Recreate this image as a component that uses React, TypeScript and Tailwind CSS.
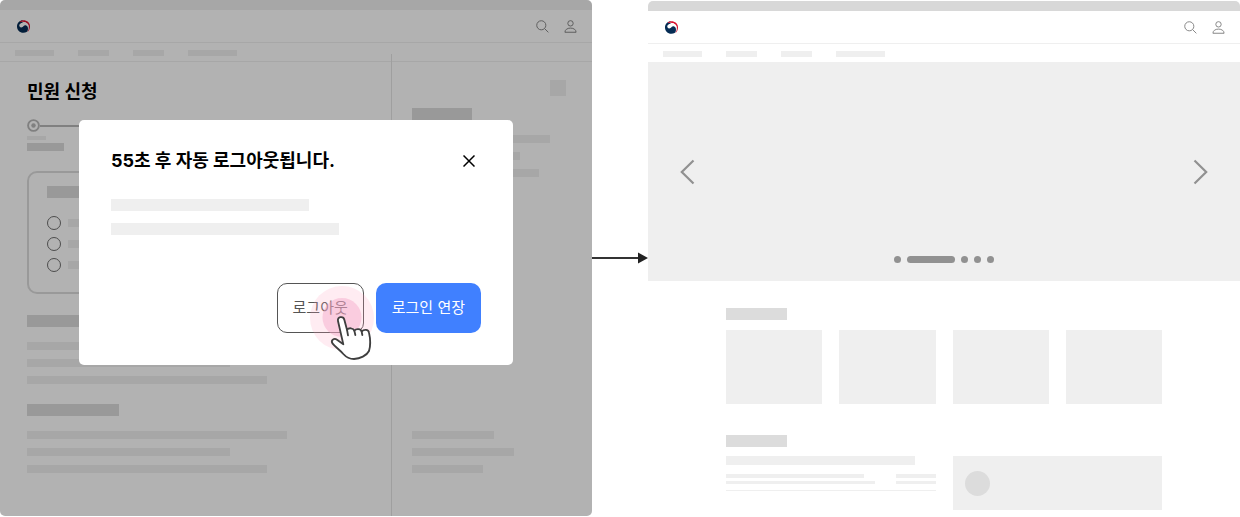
import React from 'react';
import clsx from 'clsx';

const Bar: React.FC<{ className?: string }> = ({ className }) => (
  <div className={clsx('bg-[#efefef]', className)} />
);

const StrongBar: React.FC<{ className?: string }> = ({ className }) => (
  <div className={clsx('h-3 bg-[#dcdcdc]', className)} />
);

const TextLines: React.FC<{ widths: string[]; className?: string }> = ({ widths, className }) => (
  <div className={clsx('flex flex-col gap-[9px]', className)}>
    {widths.map((width) => (
      <Bar key={width} className={clsx('h-2', width)} />
    ))}
  </div>
);

const GovLogo = () => (
  <svg viewBox="0 0 39 38" className="h-[13px] w-[13px]" aria-hidden="true">
    <path d="M19 0C8 0 0 8 0 19s8 19 19 19c8 0 13-4 15-9 3-6 1-12-4-14L12 4z" fill="#052c54" />
    <path d="M9 3C22-4 39 4 39 18c0 8-3 13-8 18 5-9 5-17 2-24C28 5 18 3 9 6z" fill="#d8122f" />
    <path
      d="M7 14C12 6 26 4 33 12C38 20 35 28 31 35C34 26 34 19 28 16C20 13 20 22 13 22C8 22 6 18 7 14Z"
      fill="#fff"
    />
  </svg>
);

const SearchIcon = () => (
  <svg viewBox="0 0 14 14" className="h-[13px] w-[13px]" fill="none" stroke="currentColor" aria-hidden="true">
    <circle cx="5.7" cy="5.7" r="4.9" />
    <path d="M9.300 9.300 13.300 13.300" />
  </svg>
);

const UserIcon = () => (
  <svg viewBox="0 0 14 14" className="h-[13px] w-[13px]" fill="none" stroke="currentColor" aria-hidden="true">
    <circle cx="7" cy="3.600" r="2.900" />
    <path d="M1 13.200C1 10.500 3.500 8.700 7 8.700s6 1.800 6 4.500z" />
  </svg>
);

const SiteHeader: React.FC<{ barClass: string }> = ({ barClass }) => (
  <>
    <div className={clsx('h-2.5', barClass)} />
    <header className="border-b border-[#efefef]">
      <div className="box-content flex h-8 items-center justify-between border-b border-[#efefef] px-[15px]">
        <a href="#home" aria-label="홈" className="ml-0.5">
          <GovLogo />
        </a>
        <div className="flex gap-[15px] text-[#7f7f7f]">
          <button type="button" aria-label="검색">
            <SearchIcon />
          </button>
          <button type="button" aria-label="내 정보">
            <UserIcon />
          </button>
        </div>
      </div>
      <nav className="flex gap-6 px-[15px] pt-[7px] pb-[5px]">
        <Bar className="h-1.5 w-[39px]" />
        <Bar className="h-1.5 w-[31px]" />
        <Bar className="h-1.5 w-[31px]" />
        <Bar className="h-1.5 w-[49px]" />
      </nav>
    </header>
  </>
);

const options = ['w-20', 'w-24', 'w-28'];

const ApplicationForm = () => (
  <main className="flex-1 px-[27px] pt-[17px] pb-[43px]">
    <h1 className="text-[18px] leading-[26px] font-bold text-black">민원 신청</h1>

    {/* Step indicator */}
    <div className="mt-3.5 flex items-center">
      <svg viewBox="0 0 13 13" className="h-[13px] w-[13px] shrink-0" aria-hidden="true">
        <circle cx="6.500" cy="6.500" r="5.400" fill="none" stroke="#b8b8b8" strokeWidth="1.900" />
        <circle cx="6.500" cy="6.500" r="2.200" fill="#b8b8b8" />
      </svg>
      <div className="h-0.5 w-40 bg-[#b8b8b8]" />
    </div>
    <Bar className="mt-1 h-1 w-[19px]" />
    <div className="mt-[3px] h-2 w-[37px] bg-[#dcdcdc]" />

    {/* Question card */}
    <fieldset className="mt-5 rounded-[10px] border-2 border-[#dcdcdc] px-[18px] pt-[13px] pb-5">
      <StrongBar className="w-24" />
      <div className="mt-[18px] flex flex-col gap-[7px]">
        {options.map((width) => (
          <label key={width} className="flex items-center gap-[7px]">
            <input
              type="radio"
              name="option"
              aria-label="선택 항목"
              className="size-3.5 appearance-none rounded-full border border-[#6e6e6e]"
            />
            <Bar className={clsx('h-2', width)} />
          </label>
        ))}
      </div>
    </fieldset>

    <StrongBar className="mt-[21px] w-[92px]" />
    <TextLines className="mt-[15px]" widths={['w-[260px]', 'w-[203px]', 'w-[240px]']} />
    <StrongBar className="mt-5 w-[92px]" />
    <TextLines className="mt-[15px]" widths={['w-[260px]', 'w-[203px]', 'w-[240px]']} />
  </main>
);

const SidePanel = () => (
  <aside className="-mt-2 flex w-[201px] flex-col border-l border-[#e4e4e4] pt-[26px] pr-[26px] pb-[43px] pl-5">
    <Bar className="size-4 self-end" />
    <StrongBar className="mt-3 w-[60px]" />
    <TextLines className="mt-[15px]" widths={['w-[138px]', 'w-[108px]', 'w-[127px]']} />
    <TextLines className="mt-auto" widths={['w-[82px]', 'w-[102px]', 'w-[71px]']} />
  </aside>
);

const TapPointer = () => (
  <svg
    viewBox="0 0 64 76"
    className="pointer-events-none absolute top-[3px] left-[33px] z-10 h-[76px] w-16"
    aria-hidden="true"
  >
    <circle cx="32" cy="32" r="32" fill="#ff9fc0" opacity="0.2" />
    <circle cx="32" cy="31.500" r="19.500" fill="#f4a6c8" opacity="0.45" />
    <g transform="translate(20 29) scale(0.3333)" stroke="#3f3f3f" strokeWidth="5.500" strokeLinecap="round" strokeLinejoin="round">
      <path
        d="M24 18C21 5 40 2 43 14L51 44C56 38 70 38 73 47C79 40 93 41 95 50C102 42 115 43 117 53C122 75 122 92 117 108C110 122 90 131 72 132C58 132 48 126 40 117C30 105 16 96 8 86C1 76 12 68 21 74L40 88Z"
        fill="#fff"
      />
      <path d="M51 44L54 61M73 47L76 60M95 50L97 60" fill="none" />
    </g>
  </svg>
);

const LogoutDialog = () => (
  <div
    role="dialog"
    aria-modal="true"
    aria-labelledby="logout-title"
    className="w-full max-w-[434px] rounded-[5px] bg-white px-8 pt-7 pb-8"
  >
    <div className="flex items-center justify-between">
      <h2 id="logout-title" className="text-[18px] leading-[26px] font-bold text-black">
        55초 후 자동 로그아웃됩니다.
      </h2>
      <button type="button" aria-label="닫기" className="flex size-6 items-center justify-center">
        <svg viewBox="0 0 12 12" className="h-3 w-3" stroke="#000" strokeWidth="1.500" aria-hidden="true">
          <path d="M.5.5l11 11M11.500.5l-11 11" />
        </svg>
      </button>
    </div>
    <div className="mt-[25px] flex flex-col gap-3">
      <Bar className="h-3 w-[198px]" />
      <Bar className="h-3 w-[228px]" />
    </div>
    <div className="mt-12 flex justify-end gap-3">
      <div className="relative">
        <button
          type="button"
          className="h-[50px] rounded-[10px] border border-[#555] px-[15px] text-[15px] text-[#555]"
        >
          로그아웃
        </button>
        <TapPointer />
      </div>
      <button type="button" className="h-[50px] rounded-[10px] bg-[#4080ff] px-4 text-[15px] text-white">
        로그인 연장
      </button>
    </div>
  </div>
);

const FlowArrow = () => (
  <div className="flex w-14 shrink-0 items-center self-center">
    <div className="h-0.5 flex-1 bg-[#333]" />
    <svg viewBox="0 0 10 12" className="h-3 w-2.5" aria-hidden="true">
      <path d="M0 .5 10 6 0 11.500z" fill="#222" />
    </svg>
  </div>
);

const HeroCarousel = () => (
  <section className="relative flex h-[218px] items-center justify-between bg-[#efefef] px-8">
    <button type="button" aria-label="이전">
      <svg viewBox="0 0 15 26" className="h-[26px] w-[15px]" fill="none" stroke="#919191" strokeWidth="2.200" aria-hidden="true">
        <path d="M13.500 1.500 1.800 13l11.700 11.500" />
      </svg>
    </button>
    <button type="button" aria-label="다음">
      <svg viewBox="0 0 15 26" className="h-[26px] w-[15px]" fill="none" stroke="#919191" strokeWidth="2.200" aria-hidden="true">
        <path d="M1.500 1.500 13.200 13 1.500 24.500" />
      </svg>
    </button>
    <div className="absolute inset-x-0 bottom-[18px] flex justify-center gap-1.5">
      <span className="size-[7px] rounded-full bg-[#919191]" />
      <span className="h-[7px] w-12 rounded-full bg-[#919191]" />
      <span className="size-[7px] rounded-full bg-[#919191]" />
      <span className="size-[7px] rounded-full bg-[#919191]" />
      <span className="size-[7px] rounded-full bg-[#919191]" />
    </div>
  </section>
);

const HomeContent = () => (
  <main className="px-[78px] pt-[27px]">
    <StrongBar className="w-[61px]" />
    <div className="mt-2.5 grid grid-cols-4 gap-[17px]">
      <Bar className="h-[74px]" />
      <Bar className="h-[74px]" />
      <Bar className="h-[74px]" />
      <Bar className="h-[74px]" />
    </div>

    <StrongBar className="mt-[31px] w-[61px]" />
    <div className="mt-[9px] grid grid-cols-2 gap-[17px]">
      <div>
        <Bar className="h-[9px] w-[189px]" />
        <div className="mt-[9px] flex justify-between border-b border-[#efefef] pb-1.5">
          <div className="flex flex-col gap-[3px]">
            <Bar className="h-1 w-[138px]" />
            <Bar className="h-[3px] w-[149px]" />
          </div>
          <div className="flex flex-col gap-[3px]">
            <Bar className="h-1 w-10" />
            <Bar className="h-[3px] w-10" />
          </div>
        </div>
      </div>
      <div className="flex h-[54px] items-center bg-[#efefef] px-3">
        <div className="size-[25px] rounded-full bg-[#dcdcdc]" />
      </div>
    </div>
  </main>
);

export default function App() {
  return (
    <div className="flex bg-white font-['Inter','Noto_Sans_CJK_KR',sans-serif]">
      {/* Application page with session timeout dialog */}
      <div className="relative flex flex-1 flex-col self-start overflow-hidden rounded-[5px] bg-white">
        <SiteHeader barClass="bg-[#efefef]" />
        <div className="flex flex-1">
          <ApplicationForm />
          <SidePanel />
        </div>
        <div className="absolute inset-0 flex items-start justify-center bg-black/30 pt-[120px]">
          <LogoutDialog />
        </div>
      </div>

      <FlowArrow />

      {/* Home page after logout */}
      <div className="mt-px flex-1 overflow-hidden rounded-t-[5px] bg-white">
        <SiteHeader barClass="bg-[#d8d8d8]" />
        <HeroCarousel />
        <HomeContent />
      </div>
    </div>
  );
}
